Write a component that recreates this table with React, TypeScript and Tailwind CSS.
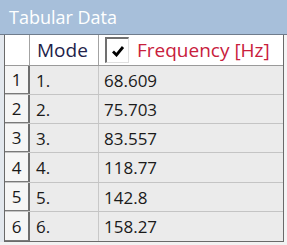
import React from 'react';

const rows = [
  { n: 1, mode: '1.', freq: '68.609', h: 'h-[29px]' },
  { n: 2, mode: '2.', freq: '75.703', h: 'h-[29px]' },
  { n: 3, mode: '3.', freq: '83.557', h: 'h-[29px]' },
  { n: 4, mode: '4.', freq: '118.77', h: 'h-[30px]' },
  { n: 5, mode: '5.', freq: '142.8', h: 'h-[29px]' },
  { n: 6, mode: '6.', freq: '158.27', h: 'h-[29px]' },
];

export default function App() {
  return (
    <div className="w-[287px] h-[245px] overflow-hidden bg-[#f2f2f2] font-['Open_Sans',sans-serif]">
      <div className="h-[35px] bg-[#a7bfda] border-b border-[#6f7c8c] flex items-center px-[9px]">
        <span className="text-white text-[18px] leading-none pb-[1px]">Tabular Data</span>
      </div>

      <div className="flex">
        <div className="w-[4px] bg-[#e3e8ee]" />
        <div className="w-[280px] border-l border-r border-b border-[#6a6a6a]">
          {/* header */}
          <div className="flex h-[31px] bg-white border-b border-[#9a9a9a]">
            <div className="w-[25px] border-r border-[#a3a3a3]" />
            <div className="w-[69px] border-r border-[#a3a3a3] flex items-center pl-[7px] text-[19px] text-[#22224a] leading-none">
              Mode
            </div>
            <div className="flex-1 flex items-center pl-[6px]">
              <div className="w-[24px] h-[26px] bg-white border-t-2 border-l-2 border-[#707070] border-r border-b border-r-[#e0e0e0] border-b-[#e0e0e0] flex items-center justify-center">
                <svg width="14" height="12" viewBox="0 0 14 12">
                  <path d="M2 6.5 L5.5 10 L12 2" fill="none" stroke="#000" strokeWidth="2.8" />
                </svg>
              </div>
              <span className="ml-[8px] text-[19px] text-[#c8203c] leading-none">Frequency [Hz]</span>
            </div>
          </div>

          {/* body */}
          {rows.map((r, i) => (
            <div key={r.n} className={`flex ${r.h} bg-[#ebebeb] ${i < rows.length - 1 ? 'border-b border-[#c4c4c4]' : ''}`}>
              <div className="w-[25px] bg-[#f6f6f6] border-r-2 border-[#6e6e6e] border-b border-b-[#7a7a7a] flex items-center justify-center text-[17px] text-[#1a1a1a] leading-none">
                {r.n}
              </div>
              <div className="w-[69px] border-r border-[#c8c8c8] flex items-center pl-[6px] text-[17px] text-[#1a1a1a] leading-none">
                {r.mode}
              </div>
              <div className="flex-1 flex items-center pl-[5px] text-[17px] text-[#1a1a1a] leading-none">
                {r.freq}
              </div>
            </div>
          ))}
        </div>
        <div className="flex-1 bg-[#f4f4f4]" />
      </div>
    </div>
  );
}
